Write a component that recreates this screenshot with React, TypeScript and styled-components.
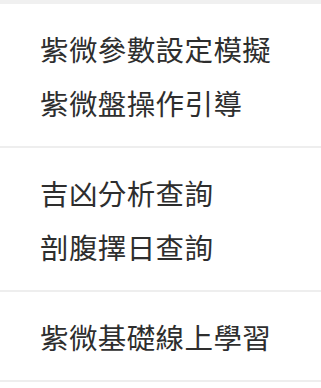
import React from "react";
import styled, { createGlobalStyle } from "styled-components";

type MenuGroup = {
  id: string;
  items: string[];
};

const groups: MenuGroup[] = [
  { id: "guide", items: ["紫微參數設定模擬", "紫微盤操作引導"] },
  { id: "query", items: ["吉凶分析查詢", "剖腹擇日查詢"] },
  { id: "learn", items: ["紫微基礎線上學習"] },
];

const GlobalStyle = createGlobalStyle`
  html, body {
    margin: 0;
    padding: 0;
    background: #fff;
  }
  body {
    font-family: "Noto Sans CJK TC", "Noto Sans CJK SC", "Noto Sans", sans-serif;
  }
`;

const App: React.FC = () => {
  return (
    <>
      <GlobalStyle />
      <Menu>
        {groups.map((group) => (
          <Section key={group.id}>
            {group.items.map((label) => (
              <MenuItem key={label} href="#">
                {label}
              </MenuItem>
            ))}
          </Section>
        ))}
      </Menu>
    </>
  );
};

export default App;

const Menu = styled.nav`
  display: flex;
  flex-direction: column;
  width: 100%;
  border-top: 4px solid #f0f0f0;
`;

const Section = styled.div`
  display: flex;
  flex-direction: column;
  padding: 17px 0 17px 40px;
  border-bottom: 2px solid #eeeeee;
`;

const MenuItem = styled.a`
  display: flex;
  align-items: center;
  height: 54px;
  font-size: 28.5px;
  letter-spacing: 0.4px;
  color: #2e2e2e;
  text-decoration: none;
  white-space: nowrap;
`;
